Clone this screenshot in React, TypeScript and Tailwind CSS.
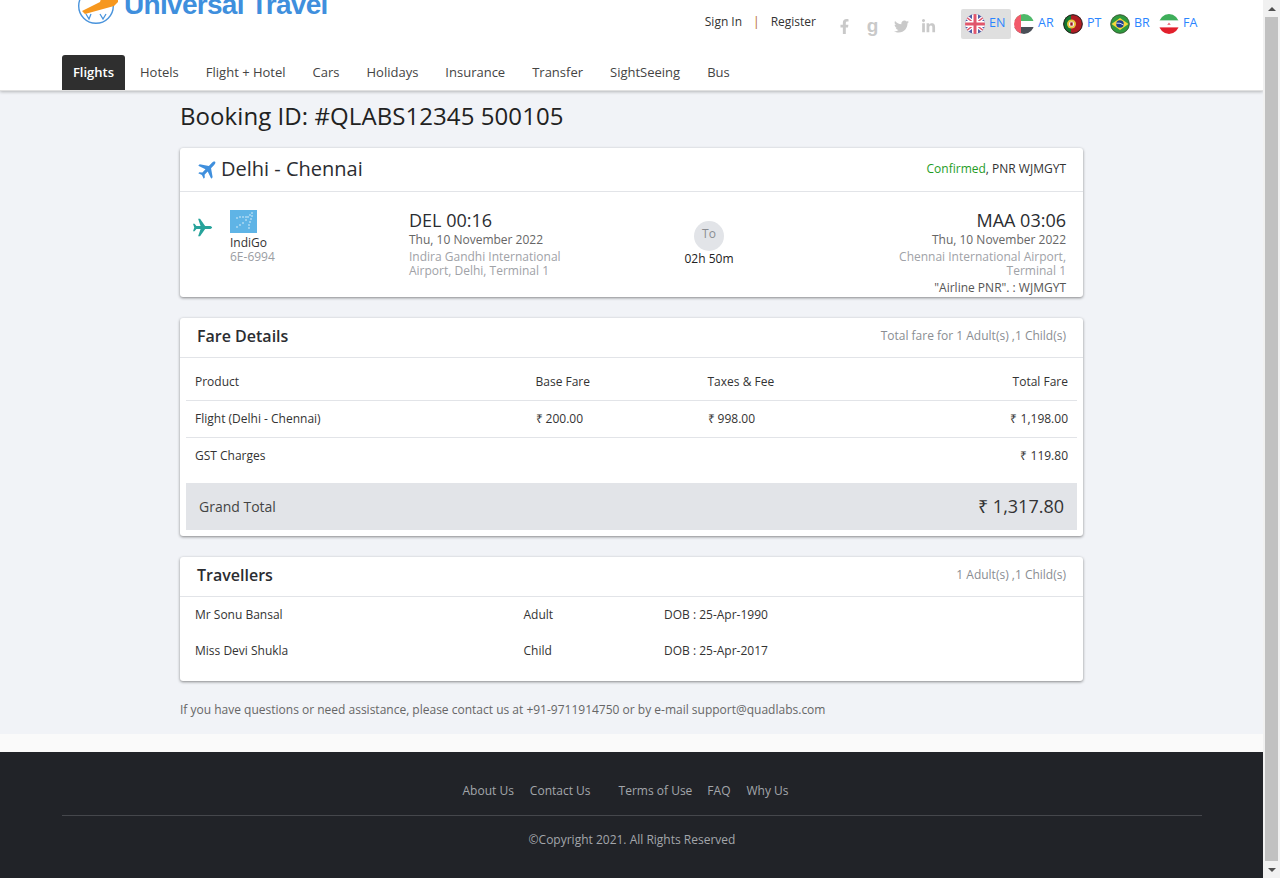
import React from "react";
import { FaFacebookF, FaTwitter, FaLinkedinIn } from "react-icons/fa";

function Plane({ className }: { className: string }) {
  return (
    <svg viewBox="0 0 24 24" className={className} fill="currentColor">
      <path d="M23 12c0-1-1.6-1.7-3.2-1.7H15L9.2 2H7l2.8 8.3H5L2.9 7.8H1.2L2.6 12 1.2 16.2h1.7L5 13.7h4.8L7 22h2.2l5.8-8.3h4.8C21.4 13.7 23 13 23 12z" />
    </svg>
  );
}

function Flag({ code }: { code: string }) {
  const c = "w-5 h-5 shrink-0";
  if (code === "EN")
    return (
      <svg viewBox="0 0 20 20" className={c}>
        <defs><clipPath id="cEN"><circle cx="10" cy="10" r="10" /></clipPath></defs>
        <g clipPath="url(#cEN)">
          <rect width="20" height="20" fill="#4f5ba6" />
          <path d="M0 2 L20 18 M20 2 L0 18" stroke="#fff" strokeWidth="4" />
          <path d="M0 2 L20 18 M20 2 L0 18" stroke="#e0566b" strokeWidth="1.5" />
          <path d="M10 0V20M0 10H20" stroke="#fff" strokeWidth="6" />
          <path d="M10 0V20M0 10H20" stroke="#e0566b" strokeWidth="3" />
        </g>
      </svg>
    );
  if (code === "AR")
    return (
      <svg viewBox="0 0 20 20" className={c}>
        <defs><clipPath id="cAR"><circle cx="10" cy="10" r="10" /></clipPath></defs>
        <g clipPath="url(#cAR)">
          <rect width="20" height="7" fill="#4fb96a" />
          <rect y="7" width="20" height="6" fill="#fff" />
          <rect y="13" width="20" height="7" fill="#4a4f57" />
          <rect width="7" height="20" fill="#f25a6a" />
        </g>
      </svg>
    );
  if (code === "PT")
    return (
      <svg viewBox="0 0 20 20" className={c}>
        <defs><clipPath id="cPT"><circle cx="10" cy="10" r="9.5" /></clipPath></defs>
        <g clipPath="url(#cPT)">
          <rect width="20" height="20" fill="#b01c22" />
          <rect width="8" height="20" fill="#14772f" />
          <circle cx="8.5" cy="10" r="4.5" fill="#e7c63c" />
          <circle cx="8.5" cy="10" r="2.6" fill="#f3f3f3" />
          <rect x="7.3" y="8.4" width="2.4" height="3.2" fill="#a01a22" />
        </g>
        <circle cx="10" cy="10" r="9.3" fill="none" stroke="#222" strokeWidth="1" />
      </svg>
    );
  if (code === "BR")
    return (
      <svg viewBox="0 0 20 20" className={c}>
        <circle cx="10" cy="10" r="9.5" fill="#2f9a3e" />
        <path d="M1.5 10 L10 4 L18.5 10 L10 16 Z" fill="#f4d83a" />
        <circle cx="10" cy="10" r="3.8" fill="#1f3f8f" />
        <path d="M6.4 9.2 Q10 8.4 13.6 11" stroke="#fff" strokeWidth="0.8" fill="none" />
        <circle cx="10" cy="10" r="9.3" fill="none" stroke="#3a4a30" strokeWidth="0.8" />
      </svg>
    );
  return (
    <svg viewBox="0 0 20 20" className={c}>
      <defs><clipPath id="cFA"><circle cx="10" cy="10" r="10" /></clipPath></defs>
      <g clipPath="url(#cFA)">
        <rect width="20" height="6.6" fill="#3eae5a" />
        <rect y="6.6" width="20" height="6.8" fill="#fff" />
        <rect y="13.4" width="20" height="6.6" fill="#e2202c" />
        <path d="M7.4 9.4 Q10 12 12.6 9.4 Q11 11.2 10 8.4 Q9 11.2 7.4 9.4Z" fill="#e2404c" />
      </g>
    </svg>
  );
}

function CardHead({ title, right }: { title: string; right: string }) {
  return (
    <div className="flex items-center justify-between h-10 pb-[4px] px-[17px] border-b border-[#e2e4e8]">
      <div className="text-[16px] font-semibold text-[#2b2d31]">{title}</div>
      <div className="text-[12px] text-[#8a8d92]">{right}</div>
    </div>
  );
}

const card = "bg-white rounded-[3px] shadow-[0_1px_3px_rgba(0,0,0,0.45)]";
const fareRow = "grid grid-cols-[340.5px_172px_1fr_auto] px-[9px] items-center text-[12px] text-[#333]";
const langs = [
  { l: "EN", cls: "w-[50px] bg-[#dfdfdf] rounded-[2px]" },
  { l: "AR", cls: "w-[49px] -ml-[1px]" },
  { l: "PT", cls: "w-[47px]" },
  { l: "BR", cls: "w-[49px]" },
  { l: "FA", cls: "w-[48px]" },
];

export default function App() {
  return (
    <div
      className="flex h-[878px] w-[1280px] overflow-hidden bg-[#f1f1f1]"
      style={{ fontFamily: '"Open Sans", sans-serif' }}
    >
      <div className="w-[1263px] h-[878px] flex flex-col bg-[#f1f3f7] shrink-0 overflow-hidden">
        {/* Header */}
        <header className="h-[91px] shrink-0 bg-white shadow-[0_1px_3px_rgba(0,0,0,0.25)] relative z-10 flex flex-col border-b border-[#e0e0e0]">
          <div className="h-[55px] flex pl-[76px] pr-[60px]">
            <div className="flex items-start -mt-[12px] h-[36px] w-[252px] shrink-0">
              <svg viewBox="0 0 50 36" className="w-[50px] h-[36px] shrink-0 -mr-[2px]">
                <circle cx="20" cy="18" r="17.3" fill="none" stroke="#4a94dc" strokeWidth="1.4" />
                <path d="M10 26 l3 5 l2-5 M24 26 l3 5 l3-5" fill="none" stroke="#4a94dc" strokeWidth="1.3" />
                <path d="M6 23 L24 14 L26 8 L32 8 L32 12 L42 11 L42 14 L38 18 L9 26 Z" fill="#f6971e" />
              </svg>
              <span className="text-[28px] leading-[36px] -mt-[1px] font-bold text-[#3f8fdd] tracking-[-0.7px] whitespace-nowrap" style={{ fontFamily: '"Liberation Sans", sans-serif' }}>
                Universal Travel
              </span>
            </div>
            <div className="flex-1 flex items-start justify-end pt-[9px]">
              <div className="flex items-center h-[26px] text-[12px] text-[#333] mr-[14px]">
                <span>Sign In</span>
                <span className="mx-[11px] text-[#b5651d]">|</span>
                <span>Register</span>
              </div>
              <div className="flex items-center h-[34px] text-[#c9c9c9] text-[15px] mr-[19px] w-[112px]">
                <span className="w-[28px] flex justify-center"><FaFacebookF /></span>
                <span className="w-[29px] flex justify-center text-[19px] leading-[15px] font-bold -mt-[2px]" style={{ fontFamily: '"Liberation Sans", sans-serif' }}>g</span>
                <span className="w-[28px] flex justify-center"><FaTwitter /></span>
                <span className="w-[27px] flex justify-center"><FaLinkedinIn /></span>
              </div>
              <div className="flex items-center text-[12.5px] text-[#2a85ff] h-[30px]">
                {langs.map(({ l, cls }) => (
                  <div key={l} className={"flex items-center gap-[4px] h-[30px] pl-[4px] " + cls}>
                    <Flag code={l} />
                    <span className="-mt-[1px]">{l}</span>
                  </div>
                ))}
              </div>
            </div>
          </div>
          <nav className="h-[35px] flex items-stretch pl-[62px] text-[13px] text-[#444]">
            <div className="w-[63px] flex items-center justify-center bg-[#2f2f2f] text-white rounded-t-[3px] font-semibold text-[13px]">Flights</div>
            <div className="flex items-center gap-[27px] pl-[15px]">
              {["Hotels", "Flight + Hotel", "Cars", "Holidays", "Insurance", "Transfer", "SightSeeing", "Bus"].map((t) => (
                <span key={t}>{t}</span>
              ))}
            </div>
          </nav>
        </header>

        {/* Content */}
        <main className="h-[643px] shrink-0 w-[903px] ml-[180px]">
          <h1 className="text-[24px] leading-[32px] mt-[9px] mb-[16px] text-[#222] tracking-[0.07px]">Booking ID: #QLABS12345 500105</h1>

          <section className={card + " h-[149px] mb-[21px]"}>
            <div className="flex items-center justify-between h-[44px] pb-[2px] px-[17px] border-b border-[#e2e4e8]">
              <div className="flex items-center gap-[2px] text-[20px] text-[#2b2d31]">
                <Plane className="w-[22px] h-[22px] text-[#3f8fdd] -rotate-45" />
                <span>Delhi - Chennai</span>
              </div>
              <div className="text-[12px] text-[#333]">
                <span className="text-[#1f9d1f]">Confirmed</span>, PNR WJMGYT
              </div>
            </div>
            <div className="flex h-[105px]">
              <div className="w-[50px] pl-[12px] pt-[25px] shrink-0">
                <Plane className="w-[21px] h-[21px] text-[#27a39b]" />
              </div>
              <div className="w-[179px] pt-[18px] shrink-0 text-[12px] leading-[14px]">
                <svg viewBox="0 0 27 23" className="w-[27px] h-[23px] block mb-[3px]">
                  <rect width="27" height="23" fill="#5fb4e6" />
                  <g fill="#fff">
                    {[[22,3],[20,5],[18,7],[22,6],[21,9],[20,12],[19,15],[16,7],[13,7],[10,7],[7,8],[16,10],[13,13],[10,15],[7,17],[19,18]].map(([x,y],i)=>(
                      <circle key={i} cx={x} cy={y} r="0.7" />
                    ))}
                  </g>
                </svg>
                <div className="text-[#333]">IndiGo</div>
                <div className="text-[#9a9da3]">6E-6994</div>
              </div>
              <div className="w-[180px] pt-[17px] shrink-0">
                <div className="text-[18px] leading-[22px] text-[#2b2d31]">DEL 00:16</div>
                <div className="text-[12px] leading-[18px] text-[#666]">Thu, 10 November 2022</div>
                <div className="text-[12px] leading-[14px] text-[#a0a2a7] mt-[1px]">Indira Gandhi International<br />Airport, Delhi, Terminal 1</div>
              </div>
              <div className="w-[240px] flex flex-col items-center pt-[29px] shrink-0">
                <div className="w-[30px] h-[30px] rounded-full bg-[#e2e4e8] text-[#8a8d92] text-[12px] flex items-center justify-center pb-[5px]">To</div>
                <div className="text-[12px] leading-[16px] text-[#222]">02h 50m</div>
              </div>
              <div className="flex-1 pt-[17px] pr-[17px] text-right">
                <div className="text-[18px] leading-[22px] text-[#2b2d31]">MAA 03:06</div>
                <div className="text-[12px] leading-[18px] text-[#666]">Thu, 10 November 2022</div>
                <div className="text-[12px] leading-[14px] text-[#a0a2a7] mt-[1px]">Chennai International Airport,<br />Terminal 1</div>
                <div className="text-[12px] leading-[16px] text-[#555] mt-[2px]">"Airline PNR". : WJMGYT</div>
              </div>
            </div>
          </section>

          <section className={card + " h-[218px] mb-[21px]"}>
            <CardHead title="Fare Details" right="Total fare for 1 Adult(s) ,1 Child(s)" />
            <div className="px-[6px]">
              <div className={fareRow + " h-[43px] pt-[6px] border-b border-[#e2e4e8]"}>
                <span>Product</span><span>Base Fare</span><span>Taxes &amp; Fee</span><span>Total Fare</span>
              </div>
              <div className={fareRow + " h-[37px] border-b border-[#e2e4e8]"}>
                <span>Flight (Delhi - Chennai)</span><span>₹ 200.00</span><span>₹ 998.00</span><span>₹ 1,198.00</span>
              </div>
              <div className={fareRow + " h-[36px]"}>
                <span>GST Charges</span><span /><span /><span>₹ 119.80</span>
              </div>
              <div className="mt-[9px] h-[47px] bg-[#e2e4e8] flex items-center justify-between pl-[13px] pr-[13px]">
                <span className="text-[14px] text-[#444]">Grand Total</span>
                <span className="text-[18px] text-[#333]">₹ 1,317.80</span>
              </div>
            </div>
          </section>

          <section className={card + " h-[124px] mb-[21px]"}>
            <CardHead title="Travellers" right="1 Adult(s) ,1 Child(s)" />
            <div className="px-[15px] text-[12px] text-[#333]">
              {[["Mr Sonu Bansal", "Adult", "DOB : 25-Apr-1990"], ["Miss Devi Shukla", "Child", "DOB : 25-Apr-2017"]].map((r) => (
                <div key={r[0]} className="grid grid-cols-[328.5px_140.5px_1fr] h-[36px] items-center">
                  <span>{r[0]}</span><span>{r[1]}</span><span>{r[2]}</span>
                </div>
              ))}
            </div>
          </section>

          <p className="text-[12px] leading-[16px] text-[#666]">If you have questions or need assistance, please contact us at +91-9711914750 or by e-mail support@quadlabs.com</p>
        </main>

        <div className="h-[18px] shrink-0 bg-[#fafafa]" />

        {/* Footer */}
        <footer className="flex-1 bg-[#212328] px-[62px] pt-[30px] text-[12px] text-[#a3a6ab]">
          <div className="flex justify-center h-[33px] items-start pr-[12px]">
            <span>About Us</span>
            <span className="ml-[16px]">Contact Us</span>
            <span className="ml-[28px]">Terms of Use</span>
            <span className="ml-[15px]">FAQ</span>
            <span className="ml-[16px]">Why Us</span>
          </div>
          <div className="border-t border-[#45474c] w-[1140px] pt-[15px] text-center">©Copyright 2021. All Rights Reserved</div>
        </footer>
      </div>

      {/* Browser scrollbar */}
      <div className="w-[17px] h-[878px] bg-[#f1f1f1] flex flex-col items-center shrink-0">
        <div className="h-[17px] flex items-center justify-center shrink-0">
          <div className="w-0 h-0 border-x-[4px] border-x-transparent border-b-[4px] border-b-[#505050]" />
        </div>
        <div className="flex-1 w-[13px] bg-[#c1c1c1]" />
        <div className="h-[17px] flex items-center justify-center shrink-0">
          <div className="w-0 h-0 border-x-[4px] border-x-transparent border-t-[4px] border-t-[#505050]" />
        </div>
      </div>
    </div>
  );
}
